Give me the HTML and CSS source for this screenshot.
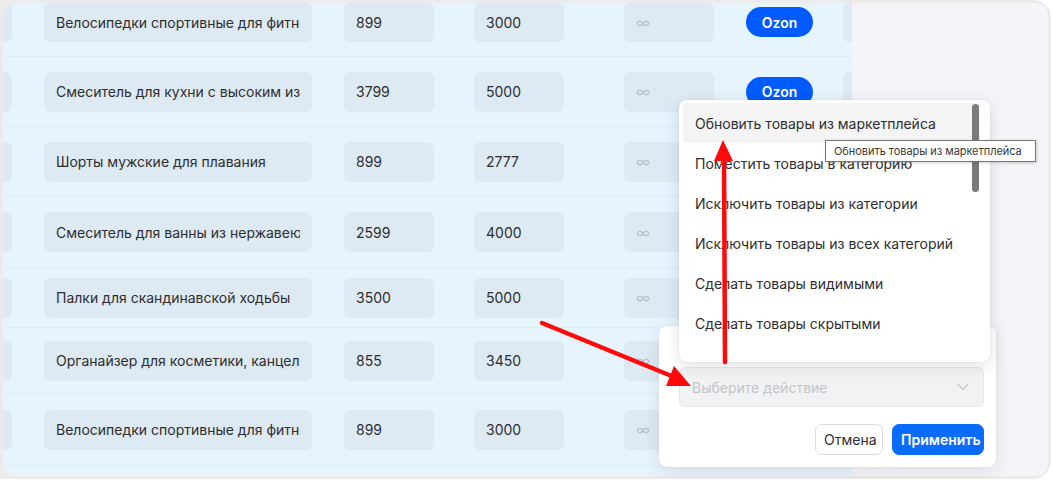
FILE: index.html
```html
<!DOCTYPE html>
<html lang="ru">
<head>
<meta charset="utf-8">
<title>Товары</title>
<link rel="stylesheet" href="styles.css">
</head>
<body>
<div class="frame">
  <div class="screen">
    <div class="table">
      <div class="row row-first">
        <div class="cell c-stub"></div>
        <div class="cell c-name"><span class="clip">Велосипедки спортивные для фитнеса</span></div>
        <div class="cell c-num">899</div>
        <div class="cell c-num c-gap40">3000</div>
        <div class="cell c-num c-inf">∞</div>
        <div class="ozon">Ozon</div>
        <div class="cell c-tail"></div>
      </div>
      <div class="row h70">
        <div class="cell c-stub"></div>
        <div class="cell c-name"><span class="clip">Смеситель для кухни с высоким изливом</span></div>
        <div class="cell c-num">3799</div>
        <div class="cell c-num c-gap40">5000</div>
        <div class="cell c-num c-inf">∞</div>
        <div class="ozon">Ozon</div>
        <div class="cell c-tail"></div>
      </div>
      <div class="row h70">
        <div class="cell c-stub"></div>
        <div class="cell c-name"><span class="clip">Шорты мужские для плавания</span></div>
        <div class="cell c-num">899</div>
        <div class="cell c-num c-gap40">2777</div>
        <div class="cell c-num c-inf">∞</div>
        <div class="ozon">Ozon</div>
        <div class="cell c-tail"></div>
      </div>
      <div class="row h71">
        <div class="cell c-stub"></div>
        <div class="cell c-name"><span class="clip">Смеситель для ванны из нержавеющей стали</span></div>
        <div class="cell c-num">2599</div>
        <div class="cell c-num c-gap40">4000</div>
        <div class="cell c-num c-inf">∞</div>
        <div class="ozon">Ozon</div>
        <div class="cell c-tail"></div>
      </div>
      <div class="row h60">
        <div class="cell c-stub"></div>
        <div class="cell c-name"><span class="clip">Палки для скандинавской ходьбы</span></div>
        <div class="cell c-num">3500</div>
        <div class="cell c-num c-gap40">5000</div>
        <div class="cell c-num c-inf">∞</div>
        <div class="ozon">Ozon</div>
        <div class="cell c-tail"></div>
      </div>
      <div class="row h66">
        <div class="cell c-stub"></div>
        <div class="cell c-name"><span class="clip">Органайзер для косметики, канцелярии</span></div>
        <div class="cell c-num">855</div>
        <div class="cell c-num c-gap40">3450</div>
        <div class="cell c-num c-inf">∞</div>
        <div class="ozon">Ozon</div>
        <div class="cell c-tail"></div>
      </div>
      <div class="row h72">
        <div class="cell c-stub"></div>
        <div class="cell c-name"><span class="clip">Велосипедки спортивные для фитнеса</span></div>
        <div class="cell c-num">899</div>
        <div class="cell c-num c-gap40">3000</div>
        <div class="cell c-num c-inf">∞</div>
        <div class="ozon">Ozon</div>
        <div class="cell c-tail"></div>
      </div>
    </div>
    <div class="side"></div>
  </div>

  <div class="panel">
    <div class="select">
      <span class="placeholder">Выберите действие</span>
      <svg class="chev" width="12" height="8" viewBox="0 0 12 8"><path d="M1 1.5 L6 6.5 L11 1.5" fill="none" stroke="#c4c6c9" stroke-width="1.3" stroke-linecap="round" stroke-linejoin="round"/></svg>
    </div>
    <div class="actions">
      <button class="btn btn-cancel">Отмена</button>
      <button class="btn btn-apply">Применить</button>
    </div>
  </div>

  <div class="menu">
    <div class="item item-active">Обновить товары из маркетплейса</div>
    <div class="item">Поместить товары в категорию</div>
    <div class="item">Исключить товары из категории</div>
    <div class="item">Исключить товары из всех категорий</div>
    <div class="item">Сделать товары видимыми</div>
    <div class="item">Сделать товары скрытыми</div>
    <div class="item item-last">Удалить товары</div>
    <div class="scrollbar"></div>
  </div>

  <div class="tooltip">Обновить товары из маркетплейса</div>

  <svg class="arrows" width="1053" height="481" viewBox="0 0 1053 481">
    <line x1="542" y1="323" x2="674" y2="377" stroke="#ff0a0a" stroke-width="4.5" stroke-linecap="round"/>
    <polygon points="691,386 674,366 666,386" fill="#ff0a0a"/>
    <line x1="725" y1="362" x2="724" y2="156" stroke="#ff0a0a" stroke-width="4.5" stroke-linecap="round"/>
    <polygon points="723,140 714,161 733,161" fill="#ff0a0a"/>
  </svg>
</div>
</body>
</html>
```

FILE: styles.css
```css
* { box-sizing: border-box; }

html, body {
  margin: 0;
  padding: 0;
  background: #ffffff;
}

body {
  font-family: Inter, "Noto Sans", "Liberation Sans", sans-serif;
  font-size: 14px;
  color: #2e2e2e;
}

.frame {
  position: relative;
  width: 1051px;
  height: 479px;
  padding: 3px;
  background: #ebebeb;
  border-radius: 0 18px 18px 0;
  overflow: hidden;
}

.screen {
  display: flex;
  height: 473px;
  border-radius: 12px;
  overflow: hidden;
}

.table {
  width: 849px;
  flex: none;
  background: #e6f4fe;
  overflow: hidden;
}

.side {
  flex: 1;
  background: #f4f5f8;
}

.row {
  display: flex;
  align-items: center;
  border-bottom: 1px solid #dcecf8;
  white-space: nowrap;
}

.row-first { height: 54px; align-items: flex-start; }
.row-first .cell { height: 39px; }
.row-first .ozon { margin-top: 4px; }
.h60 { height: 60px; }
.h66 { height: 66px; }
.h70 { height: 70px; }
.h71 { height: 71px; }
.h72 { height: 72px; }

.cell {
  flex: none;
  height: 40px;
  background: #dde9f3;
  border-radius: 6px;
  display: flex;
  align-items: center;
  padding: 0 12px;
  color: #2e2e2e;
}

.c-stub {
  width: 9px;
  padding: 0;
  border-radius: 0 6px 6px 0;
}

.c-name {
  width: 268px;
  margin-left: 32px;
}

.clip {
  display: block;
  width: 100%;
  overflow: hidden;
  white-space: nowrap;
}

.c-num {
  width: 90px;
  margin-left: 32px;
}

.c-gap40 { margin-left: 40px; }

.c-inf {
  margin-left: 60px;
  color: #b9c0c7;
  font-size: 15px;
}

.ozon {
  flex: none;
  margin-left: 32px;
  width: 67px;
  height: 30px;
  border-radius: 15px;
  background: #005bff;
  color: #ffffff;
  font-weight: 600;
  display: flex;
  align-items: center;
  justify-content: center;
  font-size: 14px;
}

.c-tail {
  width: 40px;
  margin-left: 30px;
}

/* bottom action panel */
.panel {
  position: absolute;
  left: 659px;
  top: 326px;
  width: 337px;
  height: 141px;
  background: #ffffff;
  border-radius: 8px;
  box-shadow: 0 4px 18px rgba(0, 0, 0, 0.10), 0 0 2px rgba(0, 0, 0, 0.06);
  padding: 41px 12px 12px 20px;
}

.select {
  height: 40px;
  background: #f1f2f4;
  border: 1px solid #e6e7ea;
  border-radius: 6px;
  display: flex;
  align-items: center;
  justify-content: space-between;
  padding: 0 12px 0 12px;
}

.placeholder { color: #c3c4c7; }

.chev { margin-right: 2px; }

.actions {
  display: flex;
  justify-content: flex-end;
  gap: 9px;
  margin-top: 17px;
}

.btn {
  font-family: inherit;
  font-size: 14px;
  height: 31px;
  border-radius: 7px;
  padding: 0 8px;
  cursor: pointer;
}

.btn-cancel {
  width: 68px;
  background: #ffffff;
  border: 1px solid #dcdcdc;
  color: #2e2e2e;
}

.btn-apply {
  width: 92px;
  background: #0a6bff;
  border: 1px solid #0a6bff;
  color: #ffffff;
  font-weight: 600;
}

/* dropdown menu */
.menu {
  position: absolute;
  left: 679px;
  top: 100px;
  width: 311px;
  height: 262px;
  background: #ffffff;
  border-radius: 8px;
  box-shadow: 0 4px 16px rgba(0, 0, 0, 0.12), 0 0 2px rgba(0, 0, 0, 0.08);
  padding: 3px 10px 0 4px;
  overflow: hidden;
}

.item {
  height: 40px;
  line-height: 42px;
  padding: 0 12px;
  border-radius: 4px;
  color: #2e2e2e;
  white-space: nowrap;
}

.item-last { padding-top: 6px; }

.item-active { background: #f4f4f5; }

.scrollbar {
  position: absolute;
  left: 293px;
  top: 4px;
  width: 7px;
  height: 88px;
  border-radius: 4px;
  background: #7a7a7a;
}

.tooltip {
  position: absolute;
  left: 825px;
  top: 140px;
  width: 211px;
  height: 22px;
  background: #ffffff;
  border: 1px solid #767676;
  box-shadow: 1px 1px 3px rgba(0, 0, 0, 0.18);
  font-size: 11px;
  letter-spacing: -0.05px;
  line-height: 20px;
  padding: 0 8px;
  color: #3a3a3a;
  white-space: nowrap;
  overflow: hidden;
}

.arrows {
  position: absolute;
  left: 0;
  top: 0;
  pointer-events: none;
}
```
